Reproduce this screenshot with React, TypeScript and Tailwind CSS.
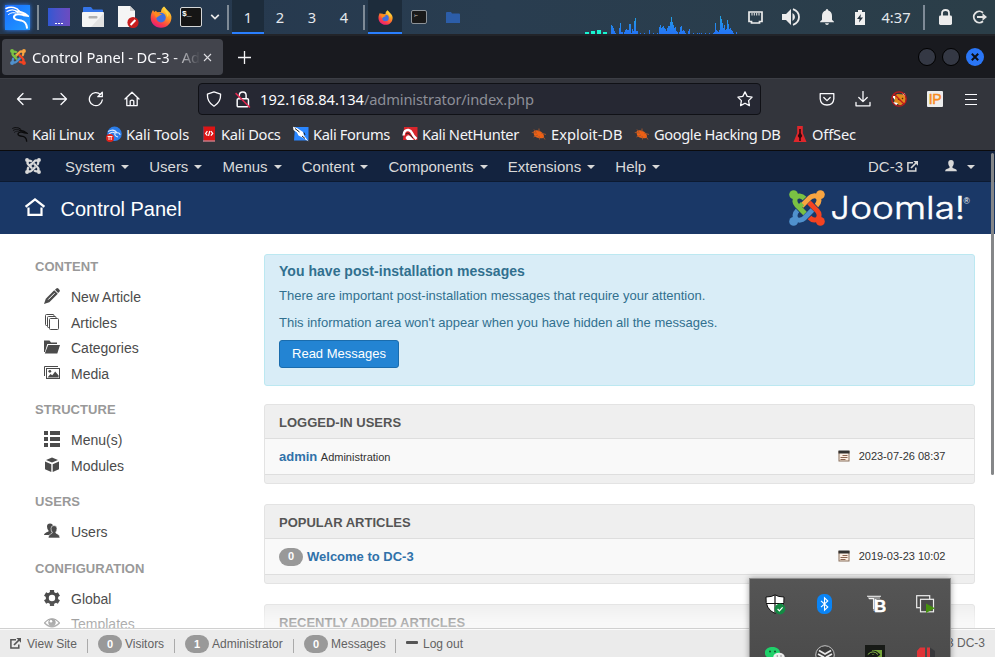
import React from "react";

type P = { className?: string };

const Hook = ({ c, r }: { c: string; r: number }) => (
  <g transform={`rotate(${r} 18 18)`} stroke={c} fill="none">
    <circle cx="4.6" cy="4.6" r="4.4" fill={c} stroke="none" />
    <path d="M15.5 8.5 C12.5 5.2 8.6 5.6 7 7.4 C5.2 9.4 5.6 13 7.8 15.2 L16 23.4" strokeWidth="5" />
  </g>
);

const JoomlaMark = ({ className, colors }: P & { colors: string[] }) => (
  <svg viewBox="0 0 36 36" className={className}>
    <Hook c={colors[0]} r={0} />
    <Hook c={colors[1]} r={90} />
    <Hook c={colors[2]} r={180} />
    <Hook c={colors[3]} r={270} />
    <path d="M14.3 14.6 L17.5 17.8" transform="translate(-4 -1)" stroke={colors[0]} strokeWidth="4.6" />
  </svg>
);
const BRAND = ["#7ac143", "#f9a541", "#f44321", "#5091cd"];
const PALE = ["#d9d9d9", "#d9d9d9", "#d9d9d9", "#d9d9d9"];

const Dragon = ({ className, c }: P & { c: string }) => (
  <svg viewBox="0 0 24 24" className={className} fill="none" stroke={c} strokeLinecap="round">
    <path d="M1 3.5 C6 1 12 2.5 14.5 6.5" strokeWidth="1.5" />
    <path d="M2 6.5 C6 4.2 10 4.5 13 7.5" strokeWidth="1.2" />
    <path d="M3.5 9.5 C6 7.5 8.5 7.3 10.5 8" strokeWidth="1" />
    <path d="M11.5 6.5 C16 6.5 19.5 8 22.5 10.8 L18.5 10.2 C15 8.6 10 8.8 9 11.6 C8.4 14.4 13 15 16.5 15.6 C20 16.4 21.6 18.6 22 22.8" strokeWidth="2" />
  </svg>
);

const Firefox = ({ className }: P) => (
  <svg viewBox="0 0 22 22" className={className}>
    <defs>
      <linearGradient id="fx" x1="0.8" y1="0" x2="0.25" y2="1">
        <stop offset="0" stopColor="#ffe84a" />
        <stop offset="0.4" stopColor="#ff9a20" />
        <stop offset="0.75" stopColor="#fb3e47" />
        <stop offset="1" stopColor="#e31587" />
      </linearGradient>
    </defs>
    <path d="M3 4 L4.2 6 L6 4.8 L7 6.2 L11 6 C11 3.5 12.3 1.5 14 .4 C14.5 3 20.8 5 21.4 10.5 C22 17 17 21.8 11 21.8 C5 21.8 .6 17.3 .7 11.5 C.8 8.2 1.8 6 3 4 Z" fill="url(#fx)" />
    <circle cx="11" cy="11.6" r="4.8" fill="#3f6fe0" />
    <path d="M4 6.5 C7 5.5 9 6.8 12 8.8 C9.8 8.9 9.4 10.2 7.6 10.8 C6.2 13.5 5 10 4 6.5 Z" fill="#ff8a1c" />
    <path d="M14 .4 C13.2 5.5 17 6 17.5 11 C20 8 17.5 4 14 .4 Z" fill="#ffd23c" />
  </svg>
);

const Sep = () => <div className="h-[25px] w-[2px] shrink-0 bg-[#7f8b97]" />;
const Cell = ({ w, children, cls = "" }: { w: number; children?: React.ReactNode; cls?: string }) => (
  <div className={"flex h-full shrink-0 items-center justify-center " + cls} style={{ width: w }}>
    {children}
  </div>
);

const BARS: [number, number][] = [
  [26, 9], [27, 8], [28, 6], [29, 3], [30, 1], [34, 6], [35, 11], [36, 2], [37, 2], [39, 2], [40, 4], [41, 5], [42, 4], [43, 4], [44, 10], [45, 10], [46, 1], [47, 5], [48, 3], [49, 13], [50, 16], [51, 3], [52, 3], [55, 1], [59, 1], [64, 4], [68, 1], [72, 1],
  [74, 7], [75, 9], [76, 6], [77, 7], [78, 8], [79, 6], [80, 5], [81, 3], [82, 6], [83, 8], [84, 8], [85, 12], [86, 17], [87, 12], [88, 9], [89, 6], [90, 7], [91, 3], [92, 2], [94, 2], [95, 7], [96, 8], [97, 3], [98, 4], [99, 3], [100, 1], [103, 3], [104, 5], [108, 1], [112, 1], [114, 1], [116, 1], [120, 1], [124, 1], [128, 1],
  [129, 2], [130, 11], [131, 4], [132, 3], [133, 2], [134, 4], [135, 18], [136, 15], [137, 11], [138, 6], [139, 9], [140, 4], [141, 5], [142, 14], [143, 10], [144, 5], [145, 6], [146, 4], [147, 3], [148, 1], [151, 2],
];

const Taskbar = () => (
  <div className="flex h-[34px] shrink-0 items-center bg-linear-to-r from-[#24364d] via-[#293d50] to-[#2b3e48]">
    <Cell w={34}>
      <div className="flex h-[25px] w-[25px] items-center justify-center bg-linear-to-br from-[#1d6cff] to-[#239bff] shadow-[0_0_4px_#2a7fff]">
        <Dragon className="h-[24px] w-[24px]" c="#fff" />
      </div>
    </Cell>
    <Cell w={8}><Sep /></Cell>
    <Cell w={33}>
      <div className="flex h-[18px] w-[22px] items-end justify-center gap-[1px] bg-linear-to-r from-[#3057d2] to-[#6c4bc0] pb-[2px]">
        <i className="h-[1px] w-[2px] bg-white" /><i className="h-[1px] w-[2px] bg-white" /><i className="h-[1px] w-[2px] bg-white" />
      </div>
    </Cell>
    <Cell w={35}>
      <svg viewBox="0 0 22 20" className="h-[20px] w-[22px]">
        <path d="M1 1 Q1 0 2 0 H9 L11 2.5 H20 Q21 2.5 21 3.5 V8 H1 Z" fill="#3474e8" />
        <rect y="5" width="22" height="15" rx="1" fill="#f4f4f4" />
        <path d="M22 6 V20 H9 Z" fill="#e2e2e2" />
        <rect x="6.5" y="9" width="9" height="2.4" rx="1" fill="#b0b0b0" />
      </svg>
    </Cell>
    <Cell w={37}>
      <svg viewBox="0 0 21 22" className="h-[22px] w-[21px]">
        <path d="M0 0 H12 L17 5 V21 H0 Z" fill="#f5f5f5" />
        <path d="M12 0 V5 H17 Z" fill="#cfcfcf" />
        <circle cx="15" cy="16.5" r="5.6" fill="#c81e1e" />
        <path d="M12.6 19 L17.4 14" stroke="#fff" strokeWidth="2" />
      </svg>
    </Cell>
    <Cell w={28}><Firefox className="h-[22px] w-[22px]" /></Cell>
    <Cell w={32}>
      <div className="flex h-[20px] w-[22px] items-start rounded-[2px] border border-[#d5d7d8] bg-[#151515] pl-[1px] font-['Liberation_Mono'] text-[8px] leading-[11px] font-bold text-white">$_</div>
    </Cell>
    <Cell w={15}>
      <svg viewBox="0 0 10 6" className="h-[6px] w-[10px]"><path d="M1.2 .8 L5 4.6 L8.8 .8" fill="none" stroke="#e8e8e8" strokeWidth="1.7" /></svg>
    </Cell>
    <Cell w={10} cls="pl-[2px]"><Sep /></Cell>
    {["1", "2", "3", "4"].map((n, i) => (
      <Cell key={n} w={32} cls={i === 0 ? "border-b-2 border-[#2a7fff] bg-[#1d2c3b] pt-[2px]" : ""}>
        <span className="text-[14.67px] text-[#e4e8ec]">{n}</span>
      </Cell>
    ))}
    <Cell w={8}><Sep /></Cell>
    <Cell w={34} cls="border-b-2 border-[#2a7fff] bg-[#1d2c3b] pt-[2px]"><Firefox className="h-[15px] w-[15px]" /></Cell>
    <Cell w={34}>
      <div className="h-[14px] w-[16px] rounded-[2px] border border-[#8c9298] bg-[#191919] pl-[2px] text-[6px] leading-[8px] text-white">›-</div>
    </Cell>
    <Cell w={34}>
      <svg viewBox="0 0 14 11" className="h-[11px] w-[14px]"><path d="M0 1 Q0 0 1 0 H5 L6 1.6 H13 Q14 1.6 14 2.6 V11 H0 Z" fill="#2c5da8" /></svg>
    </Cell>
    <Cell w={115} />
    <svg viewBox="0 0 154 34" className="h-[34px] w-[154px] shrink-0" shapeRendering="crispEdges">
      <defs>
        <linearGradient id="cpu" gradientUnits="userSpaceOnUse" x1="0" y1="14" x2="0" y2="32">
          <stop offset="0" stopColor="#22a8e0" /><stop offset="1" stopColor="#2477f5" />
        </linearGradient>
      </defs>
      <path d="M0 33 h4 M18 33 h4" stroke="#18f5d0" strokeWidth="2" />
      <path d="M6 32.5 h4" stroke="#18f5d0" strokeWidth="3" />
      <path d="M12 32 h4" stroke="#18f5d0" strokeWidth="4" />
      {BARS.map(([x, h]) => <rect key={x} x={x} y={34 - h} width="1" height={h} fill="url(#cpu)" />)}
    </svg>
    <Cell w={33}>
      <svg viewBox="0 0 15 13" className="h-[13px] w-[15px]"><path d="M1 1 H14 V10.5 H11.5 V12 H3.5 V10.5 H1 Z" fill="none" stroke="#ececec" strokeWidth="1.7" /><path d="M4 2 V4.5 M6.3 2 V4.5 M8.7 2 V4.5 M11 2 V4.5" stroke="#ececec" strokeWidth="1" /></svg>
    </Cell>
    <Cell w={38}>
      <svg viewBox="0 0 18 18" className="h-[18px] w-[18px]"><path d="M0 6 H4 L9 1 V17 L4 12 H0 Z M10.5 5 Q13 6.3 13 9 Q13 11.7 10.5 13 Z" fill="#ececec" /><path d="M11 1.2 Q17 3.5 17 9 Q17 14.5 11 16.8" fill="none" stroke="#ececec" strokeWidth="1.8" /></svg>
    </Cell>
    <Cell w={33}>
      <svg viewBox="0 0 14 16" className="h-[16px] w-[14px]"><path d="M7 0 Q8.3 0 8.3 1.5 Q12 2.6 12 7 V10.8 L14 12.8 V13.3 H0 V12.8 L2 10.8 V7 Q2 2.6 5.7 1.5 Q5.7 0 7 0 Z M5 14.2 H9 Q8.7 16 7 16 Q5.3 16 5 14.2Z" fill="#ececec" /></svg>
    </Cell>
    <Cell w={34}>
      <svg viewBox="0 0 10 15" className="h-[15px] w-[10px]"><path d="M0 2 H3 V0 H7 V2 H10 V15 H0 Z" fill="#f0f0f0" /><path d="M6 4 L2 9 H4.6 L4 12.5 L8 7.5 H5.4 Z" fill="#26343f" /></svg>
    </Cell>
    <Cell w={38}><span className="text-[14.67px] text-[#e4e8ec]">4:37</span></Cell>
    <Cell w={17}><Sep /></Cell>
    <Cell w={26}>
      <svg viewBox="0 0 13 16" className="h-[16px] w-[13px]"><rect y="6.5" width="13" height="9.5" rx="1.4" fill="#ececec" /><path d="M3 7 V4.3 Q3 1 6.5 1 Q10 1 10 4.3 V7" fill="none" stroke="#ececec" strokeWidth="1.8" /></svg>
    </Cell>
    <Cell w={37} cls="pl-[6px]">
      <svg viewBox="0 0 16 14" className="h-[14px] w-[16px]"><path d="M11 2.7 A5.6 5.6 0 1 0 11 11.3" fill="none" stroke="#e4e4e4" strokeWidth="1.9" /><path d="M5 6 H10.5 V3.2 L15 7 L10.5 10.8 V8 H5 Z" fill="#e4e4e4" /></svg>
    </Cell>
  </div>
);

const TabStrip = () => (
  <div className="flex h-[45px] shrink-0 items-center border-t-2 border-b border-t-[#222429] border-b-[#3c3e45] bg-[#191a1f] pl-[2px]">
    <div className="flex h-[36px] w-[221px] shrink-0 items-center rounded-[4px] bg-[#42444c] pl-[8px]">
      <JoomlaMark className="h-[16px] w-[16px]" colors={BRAND} />
      <div className="ml-[6px] w-[168px] overflow-hidden text-[14.67px] tracking-[-0.04px] whitespace-nowrap text-[#fbfbfe] [mask-image:linear-gradient(to_right,#000_140px,transparent_168px)]">Control Panel - DC-3 - Administration</div>
      <svg viewBox="0 0 9 9" className="ml-[3px] h-[9px] w-[9px]"><path d="M1 1 L8 8 M8 1 L1 8" stroke="#dedee2" strokeWidth="1.1" /></svg>
    </div>
    <svg viewBox="0 0 13 13" className="ml-[15px] h-[13px] w-[13px]"><path d="M6.5 0 V13 M0 6.5 H13" stroke="#f4f4f6" strokeWidth="1.3" /></svg>
    <div className="ml-auto flex gap-[6px] pr-[11px]">
      <i className="h-[18px] w-[18px] rounded-full border border-black bg-[#343844]" />
      <i className="h-[18px] w-[18px] rounded-full border border-black bg-[#343844]" />
      <i className="flex h-[18px] w-[18px] items-center justify-center rounded-full bg-[#2a76f6]">
        <svg viewBox="0 0 8 8" className="h-[8px] w-[8px]"><path d="M.8 .8 L7.2 7.2 M7.2 .8 L.8 7.2" stroke="#0c0f16" strokeWidth="2" /></svg>
      </i>
    </div>
  </div>
);

const Line = ({ d, w = 36, vb = "0 0 16 16", sw = 1.3 }: { d: string; w?: number; vb?: string; sw?: number }) => (
  <Cell w={w}>
    <svg viewBox={vb} className="h-[16px] w-[16px]" fill="none" stroke="#fbfbfe" strokeWidth={sw} strokeLinejoin="round" strokeLinecap="round"><path d={d} /></svg>
  </Cell>
);

const NavBar = () => (
  <div className="flex h-[40px] shrink-0 items-center bg-[#33353c] pl-[6px]">
    <Line d="M15 8 H1.5 M7 2.5 L1.5 8 L7 13.5" />
    <Line d="M1 8 H14.5 M9 2.5 L14.5 8 L9 13.5" />
    <Line d="M14.3 9 A6.5 6.5 0 1 1 12.5 3.6 M14.3 1.2 V5.7 H9.8 Z" />
    <Line w={35} d="M1 8 L8 1.2 L15 8 M2.8 6.8 V14.6 H13.2 V6.8 M6.2 14.4 V10 Q8 8.2 9.8 10 V14.4" />
    <div className="ml-[49px] flex h-[32px] w-[563px] shrink-0 items-center rounded-[4px] border border-[#101116] bg-[#262833]">
      <Line w={30} d="M8 .9 L14.6 3.2 Q15 11 8 15.2 Q1 11 1.4 3.2 Z" />
      <Cell w={27}>
        <svg viewBox="0 0 16 16" className="h-[17px] w-[17px]" fill="none" stroke="#fbfbfe" strokeWidth="1.4"><rect x="3" y="7.3" width="10.6" height="7.6" rx="1" /><path d="M5 7 V4.3 Q5 1 8.3 1 Q11.4 1 11.4 4.3 V7" /><path d="M1.5 2 L15 15.5" stroke="#e22850" /></svg>
      </Cell>
      <span className="ml-[4px] text-[14.67px] whitespace-nowrap text-[#fbfbfe]">192.168.84.134<span className="tracking-[-0.16px] text-[#8d8f98]">/administrator/index.php</span></span>
      <div className="ml-auto h-full"><Line w={31} d="M8 .9 L10.2 5.4 L15.1 6.1 L11.6 9.6 L12.4 14.6 L8 12.2 L3.6 14.6 L4.4 9.6 L.9 6.1 L5.8 5.4 Z" /></div>
    </div>
    <div className="ml-[48px] flex h-full">
      <Line d="M1.2 2.6 H14.8 V8 Q14.3 14 8 14 Q1.7 14 1.2 8 Z M4.8 6.5 L8 9.6 L11.2 6.5" />
      <Line d="M8 .5 V10.5 M3.8 6.5 L8 10.6 L12.2 6.5 M1 11.5 V14.8 H15 V11.5" />
      <Cell w={36}>
        <svg viewBox="0 0 16 16" className="h-[16px] w-[16px]"><path d="M1 4 L3.5 5.5 L6 3 L13 3.5 L15 7 L14 12 L9 14.5 L3 11 L4 8 Z" fill="#e08a1e" /><path d="M.8 5 L4 5 L4 9 Z M2 11 L7 12 L5 14.5Z M11 2 L14 2.5 L14.5 6Z" fill="#fff" /><path d="M7 8 L9 9 M11 7 L12 8" stroke="#582a08" strokeWidth="1.2" /><circle cx="8" cy="8" r="7.2" fill="none" stroke="#c2171b" strokeWidth="1.3" /><path d="M3 3 L13 13" stroke="#c2171b" strokeWidth="1.3" /></svg>
      </Cell>
      <Cell w={36}>
        <div className="flex h-[16px] w-[16px] items-center justify-center rounded-[1px] bg-[#ededed] font-['Liberation_Sans'] text-[14px] leading-[16px] tracking-[-0.3px] text-[#f78a1d] [-webkit-text-stroke:0.5px_#f78a1d]">IP</div>
      </Cell>
      <Cell w={36}>
        <svg viewBox="0 0 12 11" className="h-[11px] w-[12px]"><path d="M0 .5 H12 M0 5.5 H12 M0 10.5 H12" stroke="#fbfbfe" strokeWidth="1" /></svg>
      </Cell>
    </div>
  </div>
);

const Bug = () => (
  <svg viewBox="0 0 16 16" className="h-[16px] w-[16px]"><path d="M2.5 5.5 Q6 3 10.5 6 Q13.5 8.5 13 12 L10.5 12.3 Q5 12.5 3 9 Z" fill="#ee6014" /><path d="M.8 6.5 L6 7 M2.5 11 L7 9 M8 2.5 L8 6 M10 7 L15 8.5 M8 10 L8.5 13.5 M12 10.5 L14 13.5 M3 3.5 L5 6" stroke="#a9572a" strokeWidth=".9" /></svg>
);

const BOOKMARKS: { w: number; label: string; track: string; icon: React.ReactNode }[] = [
  { w: 94, label: "Kali Linux", track: "tracking-[-0.4px]", icon: <Dragon className="h-[16px] w-[16px]" c="#0b0b0c" /> },
  {
    w: 95, label: "Kali Tools", track: "tracking-[-0.13px]", icon: (
      <svg viewBox="0 0 16 16" className="h-[16px] w-[16px]"><circle cx="8.5" cy="7.8" r="7.3" fill="#2b7de9" /><path d="M2 5.5 Q8 2 11 7 M3 8 Q6 5 9 7 Q14 6 14 9 M9 7 Q8 10 12 11" fill="none" stroke="#dbe9ff" strokeWidth="1.1" /><circle cx="4" cy="12" r="4" fill="#e2231a" /><path d="M1.6 10.5 H6.4 M3 10.5 V14 M5.2 10.5 V14" stroke="#fff" strokeWidth=".9" /></svg>
    ),
  },
  { w: 92, label: "Kali Docs", track: "tracking-[-0.3px]", icon: <svg viewBox="0 0 16 16" className="h-[16px] w-[16px]"><rect x="2" y=".5" width="12" height="15" fill="#dd1414" /><path d="M2.5 1 V15.5" stroke="#7e3a52" strokeWidth="1" /><path d="M2 15 H14" stroke="#b9a9b9" strokeWidth="1" /><path d="M6.4 5.2 L4.6 7.4 L6.4 9.6 M9.9 5.2 L11.7 7.4 L9.9 9.6 M8.8 5 L7.5 9.8" fill="none" stroke="#fff" strokeWidth="1.2" /></svg> },
  { w: 109, label: "Kali Forums", track: "tracking-[-0.37px]", icon: <svg viewBox="0 0 16 16" className="h-[16px] w-[16px]"><path d="M2 1 H15.5 V14.5 H1 Z" fill="#2a86ff" /><path d="M0 .8 L4 2 L10 6 L11 9.5 L15.5 15.5 L9.5 11.5 L5.5 9.5 L4 6.5 L.5 4 Z" fill="#fff" /><path d="M2 2.5 L6.5 6 M9 10 L12 12.5 M11 6.5 L12 9" stroke="#222" strokeWidth="1" fill="none" /></svg> },
  { w: 129, label: "Kali NetHunter", track: "tracking-[-0.36px]", icon: <svg viewBox="0 0 16 16" className="h-[16px] w-[16px]"><path d="M2 1 H15.5 V14 H1 Z" fill="#d9262c" /><path d="M1.5 9.5 Q2 3.5 6.5 4 Q9 4.5 10 7 Q11 10 14.5 13" fill="none" stroke="#fff" strokeWidth="2.4" /><path d="M3.5 12 Q5 8 8 10 L12 14 H5 Z" fill="#fff" /><path d="M4 8 Q6 5.5 8 8.5 L11 12" fill="none" stroke="#222" strokeWidth="1" /></svg> },
  { w: 103, label: "Exploit-DB", track: "", icon: <Bug /> },
  { w: 158, label: "Google Hacking DB", track: "tracking-[-0.4px]", icon: <Bug /> },
  { w: 90, label: "OffSec", track: "tracking-[-0.15px]", icon: <svg viewBox="0 0 16 16" className="h-[16px] w-[16px]"><path d="M5.2 0 H10.8 V7 L14.5 16 H1.5 L5.2 7 Z" fill="#e0262b" /><path d="M7.2 3 H8.8 V7 L10.3 10 L8.8 12 V15 H7.2 V12 L5.7 10 L7.2 7 Z" fill="#34090b" /></svg> },
];

const Bookmarks = () => (
  <div className="flex h-[32px] shrink-0 items-center border-b border-[#0b0b0d] bg-[#33353c] pb-px pl-[12px]">
    {BOOKMARKS.map((b) => (
      <div key={b.label} className="flex shrink-0 items-center gap-[4px]" style={{ width: b.w }}>
        {b.icon}
        <span className={"text-[14.67px] whitespace-nowrap text-[#f4f4f7] " + b.track}>{b.label}</span>
      </div>
    ))}
  </div>
);

const Caret = () => <i className="ml-[6px] h-0 w-0 border-x-4 border-t-4 border-x-transparent border-t-[#d9d9d9]" />;
const PopOut = ({ className, c }: P & { c: string }) => (
  <svg viewBox="0 0 11 11" className={className} fill="none" stroke={c}><path d="M6 1.8 H.9 V10 H8.8 V6.5" strokeWidth="1.5" /><path d="M4 7 L9 2" strokeWidth="1.7" /><path d="M6.3 0 H11 V4.7 Z" fill={c} stroke="none" /></svg>
);
const Person = ({ className, c }: P & { c: string }) => (
  <svg viewBox="0 0 12 12" className={className}><path d="M6 0 Q8.8 0 8.8 3 Q8.8 5.5 7.3 7 Q7.3 8.2 9 8.6 Q12 9.2 12 11.2 H0 Q0 9.2 3 8.6 Q4.7 8.2 4.7 7 Q3.2 5.5 3.2 3 Q3.2 0 6 0 Z" fill={c} /></svg>
);

const AdminNav = () => (
  <div className="flex h-[31px] shrink-0 items-center border-b border-[#0c1a31] bg-[#13233f] pl-[25px] text-[15px] text-[#d9d9d9]">
    <JoomlaMark className="h-[16px] w-[16px]" colors={PALE} />
    <div className="ml-[24px] flex gap-[20.2px] pt-[2px]">
      {["System", "Users", "Menus", "Content", "Components", "Extensions", "Help"].map((m) => (
        <span key={m} className="flex items-center">{m}<Caret /></span>
      ))}
    </div>
    <div className="ml-auto flex items-center pt-px pr-[20px]">
      <span className="pt-px">DC-3</span><PopOut className="ml-[4px] h-[11px] w-[11px]" c="#d9d9d9" />
      <Person className="mb-px ml-[27px] h-[12px] w-[12px]" c="#d9d9d9" />
      <span className="ml-[4px] flex"><Caret /></span>
    </div>
  </div>
);

const Header = () => (
  <div className="flex h-[52px] shrink-0 items-center bg-[#1a3867] pl-[25px] text-white">
    <svg viewBox="0 0 20 18" className="mb-[2px] h-[18px] w-[20px]"><path d="M.6 8.8 L10 1.4 L19.4 8.8" fill="none" stroke="#fff" strokeWidth="2.2" /><path d="M3.5 9.5 V16.9 H16.5 V9.5" fill="none" stroke="#fff" strokeWidth="2.2" /></svg>
    <h1 className="ml-[15.5px] pt-[2px] text-[20px] leading-[24px]">Control Panel</h1>
    <div className="mr-[24px] ml-auto flex items-center">
      <JoomlaMark className="h-[36px] w-[36px]" colors={BRAND} />
      <svg viewBox="0 0 146 36" className="h-[36px] w-[146px]" fontFamily="Inter" fontWeight="300" fontSize="30.5" fill="#fff" stroke="#fff" strokeWidth=".5">
        <text x="5.5" y="29.3" textLength="139.5" lengthAdjust="spacingAndGlyphs">
          <tspan textLength="19" lengthAdjust="spacingAndGlyphs">J</tspan>
          <tspan textLength="115" lengthAdjust="spacingAndGlyphs">oomla!</tspan>
        </text>
        <text x="138.5" y="13.5" fontFamily="Liberation Sans" fontSize="8.5" stroke="none">®</text>
      </svg>
    </div>
  </div>
);

const I = ({ children }: { children: React.ReactNode }) => (
  <svg viewBox="0 0 16 16" className="mb-[3px] h-[16px] w-[16px] shrink-0" fill="#4b4b4b">{children}</svg>
);
const ICONS: Record<string, React.ReactNode> = {
  "New Article": <><path d="M11 1.8 L12.3 .5 Q13.3 -.3 14.3 .6 L15.4 1.7 Q16.3 2.7 15.4 3.7 L14.2 5 Z" /><path d="M10.2 2.2 L13.8 5.8 L5.3 14.2 L0 16 L1.8 10.7 Z" /><path d="M10.6 5.2 L4.2 11.6" stroke="#fff" strokeWidth="1" /></>,
  Articles: <g fill="#fff" stroke="#4b4b4b" strokeWidth="1"><rect x="1.5" y=".5" width="8.5" height="11" rx="1" /><rect x="3.5" y="2.5" width="8.5" height="11" rx="1" /><rect x="5.5" y="4.5" width="9" height="11" rx="1" /></g>,
  Categories: <path d="M0 1.5 H5.5 L7 3.5 H13 V5 H3.3 L.9 13 H0 Z M4.2 6 H16 L13.3 14.5 H.8 Z" />,
  Media: <><path d="M.5 11 V1.5 H14" fill="none" stroke="#4b4b4b" strokeWidth="1" /><rect x="2.5" y="3.5" width="13" height="10" fill="#fff" stroke="#4b4b4b" strokeWidth="1" /><circle cx="5.8" cy="6.3" r="1.4" /><path d="M3.5 12.5 L6.5 9 L8.3 10.3 L11.2 6.6 L14.6 10.5 V12.5 Z" /></>,
  "Menu(s)": <path d="M0 0 H4 V4 H0 Z M6 0 H16 V4 H6 Z M0 6 H4 V10 H0 Z M6 6 H16 V10 H6 Z M0 12 H4 V16 H0 Z M6 12 H16 V16 H6 Z" />,
  Modules: <path d="M8 .5 L14 3 L8 5.6 L2 3 Z M1 4.5 L7.3 7.2 V15 L1 12.2 Z M15 4.5 L8.7 7.2 V15 L15 12.2 Z" />,
  Users: <><path d="M6 .5 Q9 .5 9 3.5 Q9 6 7.5 7.5 V8.5 L9 12 H0 Q0 10 4.5 8.5 V7.5 Q3 6 3 3.5 Q3 .5 6 .5 Z" /><path d="M10 2.5 Q13 2.5 13 5.5 Q13 8 11.7 9.3 Q11.7 10.5 13.5 11 Q16 12 16 15 H4.2 Q4.2 12 6.7 11 Q8.3 10.5 8.3 9.3 Q7 8 7 5.5 Q7 2.5 10 2.5 Z" stroke="#fff" strokeWidth=".6" /></>,
  Global: <><circle cx="8" cy="8" r="4.7" fill="none" stroke="#4b4b4b" strokeWidth="3" /><g stroke="#4b4b4b" strokeWidth="4.2"><path d="M8 0 V3 M8 13 V16 M1.1 4 L3.5 5.4 M12.5 10.6 L14.9 12 M1.1 12 L3.5 10.6 M12.5 5.4 L14.9 4" /></g></>,
  Templates: <><path d="M.5 8 Q8 -.5 15.5 8 Q8 15.5 .5 8 Z" fill="#fff" stroke="#4b4b4b" strokeWidth="1.2" /><circle cx="8" cy="7.6" r="3.7" /><circle cx="7" cy="6.3" r="1.3" fill="#fff" /></>,
};
const GROUPS: [string, string[]][] = [
  ["CONTENT", ["New Article", "Articles", "Categories", "Media"]],
  ["STRUCTURE", ["Menu(s)", "Modules"]],
  ["USERS", ["Users"]],
  ["CONFIGURATION", ["Global", "Templates"]],
];

const Sidebar = () => (
  <nav className="w-[264px] shrink-0 pt-[10px] pl-[35px]">
    {GROUPS.map(([h, items]) => (
      <div key={h}>
        <h3 className="flex h-[41px] items-center pt-[5px] text-[13px] font-bold tracking-[0.05px] text-[#999]">{h}</h3>
        {items.map((t) => (
          <div key={t} className="flex h-[25.5px] items-center pl-[9px] text-[14px] text-[#4b4b4b]">
            <I>{ICONS[t]}</I><span className="ml-[11px]">{t}</span>
          </div>
        ))}
      </div>
    ))}
  </nav>
);

const Calendar = () => (
  <svg viewBox="0 0 12 12" className="mb-px h-[12px] w-[12px]"><rect x="1" y="1.5" width="10" height="9.5" fill="#fbeee2" stroke="#8a705c" strokeWidth="1" /><path d="M.5 .5 H11.5 V3.5 H.5 Z" fill="#33312f" /><path d="M4.5 5.5 H9.5 M2.5 7.5 H9.5 M2.5 9.5 H7.5" stroke="#8a6450" strokeWidth="1" /></svg>
);
const Badge = ({ n, className = "" }: P & { n: string }) => (
  <span className={"flex h-[18px] w-[24px] items-center justify-center rounded-[9px] bg-[#999] text-[11px] font-bold text-white " + className}>{n}</span>
);

const Panel = ({ title, date, children }: { title: string; date?: string; children?: React.ReactNode }) => (
  <section className="mb-[20px] h-[80px] shrink-0 rounded-[3px] border border-[#e3e3e3] bg-[#efefef]">
    <h2 className="flex h-[34px] items-center border-b border-[#dedede] pt-[3px] pl-[14px] text-[13px] font-bold text-[#555]">{title}</h2>
    <div className="flex h-[36px] items-center border-b border-[#dedede] bg-[#f9f9f9] pl-[14px]">
      {children}
      {date && <div className="mr-[28.5px] ml-auto flex items-center text-[11px] text-[#333]"><Calendar /><span className="ml-[8.5px]">{date}</span></div>}
    </div>
  </section>
);

const Main = () => (
  <main className="flex w-[711px] shrink-0 flex-col pt-[20px]">
    <div className="mb-[18px] h-[132px] shrink-0 rounded-[3px] border border-[#bce8f1] bg-[#d9edf7] pt-[7px] pl-[14px] text-[13px] leading-[18px] text-[#31708f]">
      <h4 className="text-[14px] font-bold tracking-[0.03px]">You have post-installation messages</h4>
      <p className="mt-[7px]">There are important post-installation messages that require your attention.</p>
      <p className="mt-[9px]">This information area won't appear when you have hidden all the messages.</p>
      <button className="mt-[8px] h-[28px] w-[120px] rounded-[3px] border border-[#1a6cad] bg-[#2384d3] text-[13px] leading-[18px] whitespace-nowrap text-white">Read Messages</button>
    </div>
    <Panel title="LOGGED-IN USERS" date="2023-07-26 08:37">
      <b className="text-[13px] text-[#3071a9]">admin</b><span className="mt-[2px] ml-[3.5px] text-[11px] text-[#333]">Administration</span>
    </Panel>
    <Panel title="POPULAR ARTICLES" date="2019-03-23 10:02">
      <Badge n="0" /><b className="ml-[4px] text-[13px] text-[#3071a9]">Welcome to DC-3</b>
    </Panel>
    <Panel title="RECENTLY ADDED ARTICLES" />
  </main>
);

const Divider = ({ className = "" }: P) => <i className={"mt-[4px] h-[14px] w-px bg-[#aaa] " + className} />;
const Status = () => (
  <footer className="relative flex h-[29px] shrink-0 items-center border-t border-[#d0d0d0] bg-[#ebebeb] pt-[2px] pl-[10px] text-[12px] whitespace-nowrap text-[#626262] shadow-[inset_0_1px_0_rgba(255,255,255,0.8),0_-15px_15px_rgba(255,255,255,0.6)]">
    <PopOut className="mb-[2px] h-[11px] w-[11px]" c="#555" />
    <span className="ml-[6px] w-[60px]">View Site</span><Divider />
    <Badge n="0" className="ml-[10px]" /><span className="ml-[3px] w-[49px]">Visitors</span><Divider />
    <Badge n="1" className="ml-[10px]" /><span className="ml-[3px] w-[81px]">Administrator</span><Divider />
    <Badge n="0" className="ml-[10px]" /><span className="ml-[3px] w-[64px]">Messages</span><Divider />
    <i className="mb-[3px] ml-[10px] h-[3px] w-[12px] rounded-[1px] bg-[#555]" /><span className="ml-[5px]">Log out</span>
    <span className="mr-[10px] mb-[2px] ml-auto">© 2023 DC-3</span>
  </footer>
);

const Tray = () => (
  <div className="absolute top-[578px] left-[749px] grid h-[110px] w-[202px] grid-cols-[49px_51px_51px_49px] grid-rows-[50px_52px] border border-[#8d8d8d] bg-linear-to-b from-[#555] to-[#484848] shadow-[0_0_6px_rgba(0,0,0,0.35)]">
    <Cell w={50}>
      <svg viewBox="0 0 21 21" className="h-[21px] w-[21px]"><path d="M10 .8 Q13 3 19 3 Q20 15 10 19.5 Q0 15 1 3 Q7 3 10 .8 Z" fill="#fff" stroke="#111" strokeWidth="1" /><path d="M10 1 V19 M1 9.5 H19" stroke="#111" strokeWidth="1.2" /><circle cx="15" cy="15" r="5.4" fill="#138a43" /><path d="M12.6 15 L14.4 16.8 L17.6 13.4" fill="none" stroke="#fff" strokeWidth="1.2" /></svg>
    </Cell>
    <Cell w={51}>
      <svg viewBox="0 0 15 20" className="h-[20px] w-[15px]"><rect width="15" height="20" rx="6.5" fill="#0a84f5" /><path d="M4 6.8 L10.8 13 L7.5 16.2 V3.8 L10.8 7 L4 13.2" fill="none" stroke="#fff" strokeWidth="1.1" /></svg>
    </Cell>
    <Cell w={52}>
      <svg viewBox="0 0 19 18" className="h-[18px] w-[19px]"><path d="M1 1 H13 V4 H10 V16 H6 V4 H1 Z" fill="#8f8f8f" /><path d="M0 1.2 H14 M2 3.6 H6 M6.5 3 V14 M8.3 4 V16" stroke="#f0f0f0" strokeWidth="1.1" /><text x="7" y="16.5" fontFamily="Liberation Sans" fontWeight="700" fontSize="17" fill="#fff" stroke="#fff" strokeWidth=".4">B</text></svg>
    </Cell>
    <Cell w={49}>
      <svg viewBox="0 0 19 18" className="h-[18px] w-[19px]"><rect x=".7" y=".7" width="13" height="12" fill="#4a4a4a" stroke="#eee" strokeWidth="1.2" /><rect x="4.5" y="4.3" width="13" height="12.5" fill="#4a4a4a" stroke="#eee" strokeWidth="1.2" /><path d="M10 8.6 L19 13.3 L10 18 Z" fill="#46920f" /></svg>
    </Cell>
    <Cell w={50}>
      <svg viewBox="0 0 20 20" className="h-[20px] w-[20px]"><path d="M7.5 2 C12 2 15 4.5 15 8 C15 11.5 12 14 7.5 14 L3 15 L3 13 C-3 9 0 2 7.5 2 Z" fill="#1fd16a" /><circle cx="5" cy="6.5" r="1" fill="#14532d" /><circle cx="10" cy="6.5" r="1" fill="#14532d" /><ellipse cx="14" cy="12.5" rx="5.8" ry="4.8" fill="#ececec" /><circle cx="12.3" cy="11" r=".8" fill="#888" /><circle cx="16" cy="11" r=".8" fill="#888" /></svg>
    </Cell>
    <Cell w={51}>
      <svg viewBox="0 0 20 20" className="h-[20px] w-[20px]"><circle cx="10" cy="10" r="9.3" fill="#3c3c3c" stroke="#c4c4c4" strokeWidth="1" /><path d="M4 5.5 L10 9 L16 5.5 M3 9 L8.5 12 V18 M17 9 L11.5 12 V18" fill="none" stroke="#e8e8e8" strokeWidth="1.8" /></svg>
    </Cell>
    <Cell w={50}>
      <svg viewBox="0 0 20 20" className="h-[20px] w-[20px]"><rect width="20" height="20" fill="#171a16" /><path d="M7 5 H17 V15 H7 Z" fill="#76a53a" /><path d="M2.5 9.5 Q8 3.5 14 9.5 Q8 15 2.5 9.5 Z M5 9.5 Q8 6.5 11 9.5 Q8 12 5 9.5" fill="none" stroke="#171a16" strokeWidth="1.8" /><path d="M2.8 9.5 Q8 4.2 13 9.5" fill="none" stroke="#8ab94c" strokeWidth="1" /></svg>
    </Cell>
    <Cell w={49}>
      <svg viewBox="0 0 18 18" className="h-[18px] w-[18px]"><path d="M0 5 L3 1.5 L8 1.5 V18 H0 Z M10 1.5 H13 V18 H10 Z" fill="#df3438" /><path d="M13 1.5 L18 5 V18 H13 Z" fill="#38383b" /></svg>
    </Cell>
  </div>
);

export default function App() {
  return (
    <div className="relative flex h-[657px] w-[995px] flex-col overflow-hidden bg-white">
      <div className="flex shrink-0 flex-col font-['Noto_Sans',sans-serif]">
        <Taskbar />
        <TabStrip />
        <NavBar />
        <Bookmarks />
      </div>
      <div className="flex min-h-0 flex-1 flex-col font-['Liberation_Sans',Arial,sans-serif]">
        <AdminNav />
        <Header />
        <div className="flex min-h-0 flex-1 overflow-hidden">
          <Sidebar />
          <Main />
        </div>
        <Status />
      </div>
      <i className="absolute top-[153px] right-px h-[322px] w-[3px] rounded-full bg-[#858789]" />
      <Tray />
    </div>
  );
}
